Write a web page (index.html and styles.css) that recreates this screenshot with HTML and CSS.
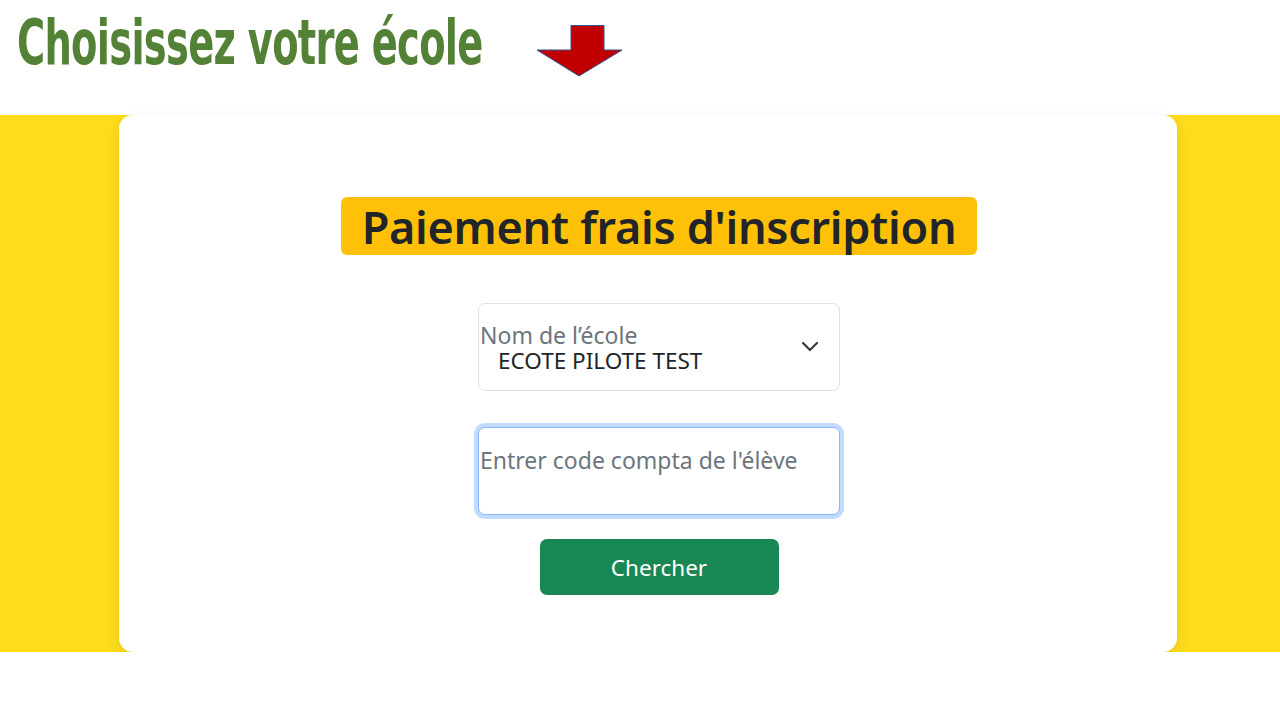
FILE: index.html
```html
<!DOCTYPE html>
<html lang="fr">
<head>
  <meta charset="UTF-8">
  <meta name="viewport" content="width=device-width, initial-scale=1.0">
  <title>Paiement frais d'inscription</title>
  <link rel="stylesheet" href="styles.css">
</head>
<body>

  <header class="top">
    <h1 class="choose">Choisissez votre école</h1>
    <svg class="arrow" width="87" height="52" viewBox="0 0 87 52">
      <polygon points="35,0.5 68,0.5 68,25 86,25 43,51 1,25 35,25" fill="#c00000" stroke="#2f528f" stroke-width="1"/>
    </svg>
  </header>

  <div class="band">
    <div class="card">
      <h2 class="title">Paiement frais d'inscription</h2>

      <div class="select-box">
        <div class="select-text">
          <span class="select-label">Nom de l’école</span>
          <span class="select-value">ECOTE PILOTE TEST</span>
        </div>
        <svg class="chevron" width="18" height="12" viewBox="0 0 18 12">
          <path d="M2 3 L9 10 L16 3" fill="none" stroke="#343a40" stroke-width="2.2" stroke-linecap="round" stroke-linejoin="round"/>
        </svg>
      </div>

      <input class="code-input" type="text" placeholder="Entrer code compta de l'élève">

      <button class="search-btn">Chercher</button>
    </div>
  </div>

</body>
</html>
```

FILE: styles.css
```css
body {
  margin: 0;
  font-family: "Noto Sans", "Open Sans", sans-serif;
  background-color: #fff;
}
.top {
  height: 115px;
  display: flex;
  align-items: flex-start;
}
.choose {
  margin: 8px 0 0 17px;
  font-family: "DejaVu Sans Condensed", "DejaVu Sans", sans-serif;
  font-stretch: condensed;
  font-weight: bold;
  font-size: 62px;
  line-height: 70px;
  color: #538135;
  letter-spacing: -1px;
  transform: scaleX(0.688);
  transform-origin: left center;
  white-space: nowrap;
  width: 466px;
}
.arrow {
  margin: 25px 0 0 53px;
}
.band {
  background-color: #fddc1c;
  height: 537px;
}
.card {
  width: 1058px;
  height: 537px;
  margin-left: 119px;
  box-sizing: border-box;
  background: #fff;
  border-radius: 14px;
  box-shadow: 0 6px 14px rgba(0, 0, 0, 0.09);
  display: flex;
  flex-direction: column;
  align-items: center;
  padding-top: 82px;
  padding-left: 22px;
}
.title {
  margin: 0;
  background-color: #ffc107;
  border-radius: 6px;
  padding: 2px 21px 0;
  font-size: 45px;
  font-weight: 600;
  line-height: 56px;
  color: #212529;
  letter-spacing: -0.3px;
}
.select-box {
  margin-top: 48px;
  width: 362px;
  height: 88px;
  box-sizing: border-box;
  border: 1px solid #dee2e6;
  border-radius: 7px;
  display: flex;
  align-items: center;
  justify-content: space-between;
  padding: 0 20px 0 1px;
}
.select-text {
  display: flex;
  flex-direction: column;
  margin-top: 3px;
}
.select-label {
  font-size: 23px;
  line-height: 24px;
  color: #6c757d;
}
.select-value {
  font-size: 22.5px;
  line-height: 27px;
  color: #212529;
  padding-left: 18px;
}
.chevron {
  margin-top: -2px;
}
.code-input {
  margin-top: 36px;
  width: 362px;
  height: 88px;
  box-sizing: border-box;
  border: 1px solid #86b7fe;
  border-radius: 7px;
  box-shadow: 0 0 0 4px rgba(13, 110, 253, 0.25);
  outline: none;
  padding: 0 0 22px 1px;
  font-family: inherit;
  font-size: 23px;
  color: #212529;
}
.code-input::placeholder {
  color: #6c757d;
}
.search-btn {
  margin-top: 24px;
  width: 239px;
  height: 56px;
  border: none;
  border-radius: 7px;
  background-color: #198754;
  color: #fff;
  font-family: inherit;
  font-size: 22.5px;
  cursor: pointer;
}
```
